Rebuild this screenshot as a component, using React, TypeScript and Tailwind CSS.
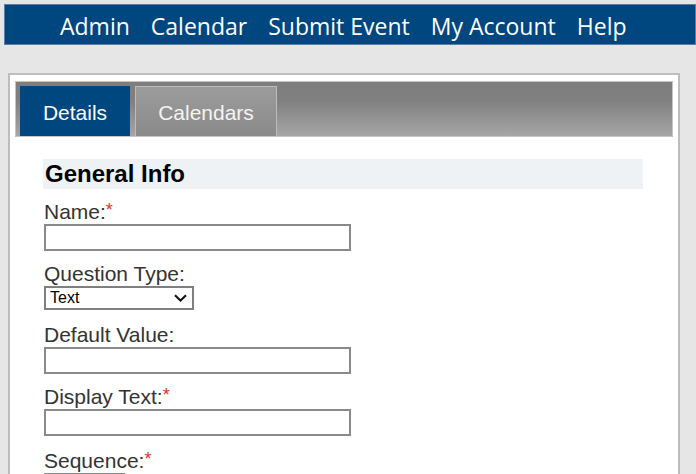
import React from "react";

const Req = () => (
  <span className="text-[#e5322d] text-[18px] leading-none align-top relative top-[1px]">*</span>
);

function Field({ label, req, children, mt }: { label: string; req?: boolean; children: React.ReactNode; mt: string }) {
  return (
    <div className={`${mt} pl-[1px]`}>
      <div className="text-[21px] leading-[24px] text-[#333]">
        {label}
        {req && <Req />}
      </div>
      {children}
    </div>
  );
}

const TextBox = ({ w = "w-[307px]" }: { w?: string }) => (
  <div className={`${w} h-[27px] border-2 border-[#8a8a8a] bg-white`} />
);

export default function App() {
  return (
    <div
      className="w-[696px] h-[474px] overflow-hidden bg-[#e6e6e6] pt-[4px] pl-[4px]"
      style={{ fontFamily: '"Liberation Sans", Arial, sans-serif' }}
    >
      <nav
        className="h-[41px] bg-[#00467f] border border-[#5b7fa6] flex items-center pt-[3px] pl-[55px] gap-[21px] text-white text-[23px]"
        style={{ fontFamily: '"Open Sans", sans-serif' }}
      >
        <span>Admin</span>
        <span>Calendar</span>
        <span>Submit Event</span>
        <span>My Account</span>
        <span>Help</span>
      </nav>

      <div className="mt-[28px] ml-[4px] w-[672px] h-[420px] bg-white border-2 border-[#bdbdbd] pt-[6px] px-[5px]">
        <div className="h-[56px] border border-[#c4c4c4] bg-[linear-gradient(to_bottom,#7e7e7e_0%,#808080_35%,#a6a6a6_100%)] flex items-end pl-[4px]">
          <div className="w-[110px] h-[50px] bg-[#00467f] text-white text-[21px] flex items-center justify-center pt-[3px]">
            Details
          </div>
          <div className="ml-[5px] w-[142px] h-[50px] border border-[#bcbcbc] border-b-0 bg-[linear-gradient(to_bottom,#9c9c9c,#8a8a8a)] text-[#f4f4f4] text-[21px] flex items-center justify-center pt-[3px]">
            Calendars
          </div>
        </div>

        <div className="pl-[28px]">
          <div className="mt-[22px] w-[600px] h-[30px] bg-[#eef2f5] flex items-center pl-[2px] text-[24px] font-bold text-black">
            General Info
          </div>

          <Field label="Name:" req mt="mt-[11px]">
            <TextBox />
          </Field>

          <Field label="Question Type:" mt="mt-[11px]">
            <div className="w-[150px] h-[24px] border-2 border-[#7f7f7f] bg-white flex items-center justify-between pl-[4px] pr-[5px] text-[16px] text-black">
              <span>Text</span>
              <svg width="13" height="8" viewBox="0 0 13 8">
                <path d="M1 1.2 L6.5 6.5 L12 1.2" fill="none" stroke="#111" strokeWidth="2" />
              </svg>
            </div>
          </Field>

          <Field label="Default Value:" mt="mt-[13px]">
            <TextBox />
          </Field>

          <Field label="Display Text:" req mt="mt-[11px]">
            <TextBox />
          </Field>

          <Field label="Sequence:" req mt="mt-[13px]">
            <TextBox w="w-[81px]" />
          </Field>
        </div>
      </div>
    </div>
  );
}
